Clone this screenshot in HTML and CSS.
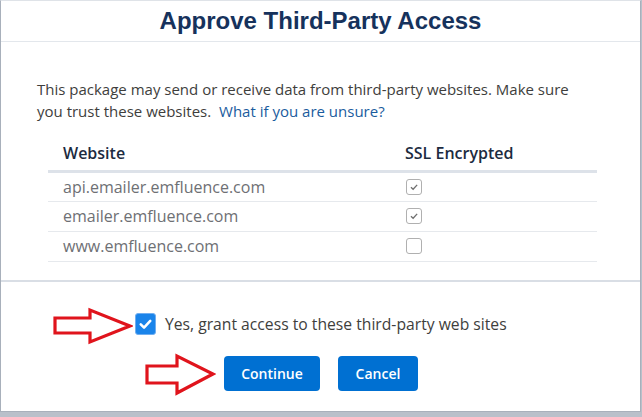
FILE: index.html
```html
<!DOCTYPE html>
<html lang="en">
<head>
<meta charset="utf-8">
<title>Approve Third-Party Access</title>
<link rel="stylesheet" href="styles.css">
</head>
<body>
<div class="modal">
  <header class="modal-header">
    <h1 class="modal-title">Approve Third-Party Access</h1>
  </header>
  <section class="modal-body">
    <p class="intro"><span>This package may send or receive data from third-party websites. Make sure</span><br><span>you trust these websites.</span> <a class="link" href="#">What if you are unsure?</a></p>
    <table class="sites">
      <thead>
        <tr><th class="col-site">Website</th><th>SSL Encrypted</th></tr>
      </thead>
      <tbody>
        <tr><td class="col-site">api.emailer.emfluence.com</td><td><span class="ssl-box"><svg viewBox="0 0 16 16" width="16" height="16"><path d="M4.5 8.3 L7 10.6 L11.6 5.6" fill="none" stroke="#707070" stroke-width="1.5"/></svg></span></td></tr>
        <tr><td class="col-site">emailer.emfluence.com</td><td><span class="ssl-box"><svg viewBox="0 0 16 16" width="16" height="16"><path d="M4.5 8.3 L7 10.6 L11.6 5.6" fill="none" stroke="#707070" stroke-width="1.5"/></svg></span></td></tr>
        <tr><td class="col-site">www.emfluence.com</td><td><span class="ssl-box"></span></td></tr>
      </tbody>
    </table>
  </section>
  <footer class="modal-footer">
    <label class="grant">
      <span class="grant-box"><svg viewBox="0 0 22 22" width="21" height="22"><path d="M5.5 11.5 L9.3 15.2 L16.5 7.5" fill="none" stroke="#ffffff" stroke-width="3" stroke-linecap="round" stroke-linejoin="round"/></svg></span>
      <span class="grant-text">Yes, grant access to these third-party web sites</span>
    </label>
    <div class="actions">
      <button class="btn" type="button">Continue</button>
      <button class="btn" type="button">Cancel</button>
    </div>
    <svg class="arrow arrow-one" viewBox="0 0 81 38" width="81" height="38"><path d="M3 11 L38 11 L38 3 L78 19 L38 35 L38 26 L3 26 Z" fill="none" stroke="#e0141c" stroke-width="3.2" stroke-linejoin="miter"/></svg>
    <svg class="arrow arrow-two" viewBox="0 0 72 43" width="72" height="43"><path d="M3 13 L33 13 L33 3 L69 21 L33 40 L33 30 L3 30 Z" fill="none" stroke="#e0141c" stroke-width="3.2" stroke-linejoin="miter"/></svg>
  </footer>
</div>
</body>
</html>
```

FILE: styles.css
```css
* { box-sizing: border-box; }

html, body {
  margin: 0;
  padding: 0;
}

body {
  width: 642px;
  height: 417px;
  background: #b9c0ca;
  overflow: hidden;
  font-family: "Open Sans", "Noto Sans", sans-serif;
}

.modal {
  width: 641px;
  height: 412px;
  background: #ffffff;
  border: 1px solid #a8b0bb;
  border-top-color: #dfe3e8;
  display: flex;
  flex-direction: column;
}

.modal-header {
  height: 41px;
  border-bottom: 1px solid #e3e7ec;
  display: flex;
  align-items: center;
  justify-content: center;
}

.modal-title {
  margin: 0;
  font-family: "Liberation Sans", Arial, sans-serif;
  font-weight: bold;
  font-size: 24px;
  line-height: 40px;
  color: #16325c;
}

.modal-body {
  height: 238px;
  padding: 36px 0 0 36px;
}

.intro {
  margin: 0;
  font-size: 15px;
  line-height: 22px;
  color: #3e3e3c;
  width: 560px;
}

.link {
  margin-left: 4px;
  color: #1a5c9e;
  text-decoration: none;
}

.sites {
  margin: 18px 0 0 11px;
  width: 549px;
  border-collapse: collapse;
  font-size: 16px;
}

.sites th {
  text-align: left;
  font-weight: 600;
  color: #1c2b3f;
  height: 31px;
  padding: 0 0 3px 0;
  border-bottom: 3px solid #dde2e9;
  line-height: 20px;
}

.sites td {
  height: 30px;
  padding: 0;
  color: #6e7074;
  border-bottom: 1px solid #e6e9ed;
  line-height: 20px;
}

.sites .col-site {
  width: 357px;
  padding-left: 15px;
}

.ssl-box {
  display: flex;
  align-items: center;
  justify-content: center;
  width: 16px;
  height: 16px;
  margin-left: 1px;
  border: 1px solid #b0b0b0;
  border-radius: 3px;
  background: #ffffff;
}

.ssl-box svg { display: block; }

.modal-footer {
  position: relative;
  flex: 1;
  border-top: 2px solid #d9dee5;
  padding: 31px 0 0 134px;
}

.grant {
  display: flex;
  align-items: center;
  gap: 9px;
  height: 22px;
  font-size: 15.7px;
  color: #3e3e3c;
}

.grant-box {
  width: 21px;
  height: 22px;
  border-radius: 3px;
  background: #1a84ea;
  border: 1px solid #70aef0;
  display: flex;
  align-items: center;
  justify-content: center;
}

.grant-box svg { display: block; }

.actions {
  display: flex;
  gap: 18px;
  margin: 21px 0 0 89px;
}

.btn {
  height: 35px;
  padding: 0;
  border: none;
  border-radius: 4px;
  background: #0070d2;
  color: #ffffff;
  font-family: "Open Sans", "Noto Sans", sans-serif;
  font-weight: 600;
  font-size: 14px;
}

.btn:first-child { width: 96px; }
.btn:last-child { width: 80px; }

.arrow {
  position: absolute;
  display: block;
}

.arrow-one {
  left: 51px;
  top: 25px;
}

.arrow-two {
  left: 143px;
  top: 71px;
}
```
